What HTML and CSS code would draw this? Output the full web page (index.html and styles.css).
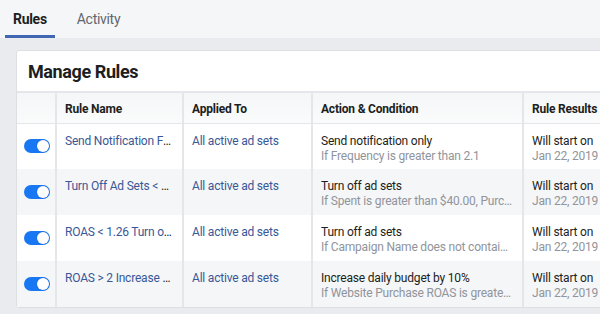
FILE: index.html
```html
<!DOCTYPE html>
<html lang="en">
<head>
    <meta charset="UTF-8">
    <title>Automated Rules</title>
    <link rel="stylesheet" href="styles.css">
</head>
<body>
    <div class="tab-bar">
        <div class="tab active">Rules</div>
        <div class="tab">Activity</div>
    </div>

    <div class="page">
        <div class="card">
            <div class="card-header">
                <h1 class="card-title">Manage Rules</h1>
            </div>

            <table class="rules-table">
                <colgroup>
                    <col class="col-toggle">
                    <col class="col-name">
                    <col class="col-applied">
                    <col class="col-action">
                    <col class="col-results">
                </colgroup>
                <thead>
                    <tr>
                        <th></th>
                        <th>Rule Name</th>
                        <th>Applied To</th>
                        <th>Action &amp; Condition</th>
                        <th>Rule Results</th>
                    </tr>
                </thead>
                <tbody>
                    <tr>
                        <td class="toggle-cell"><span class="toggle"></span></td>
                        <td><a class="link">Send Notification Frequency &gt; 2.1</a></td>
                        <td><a class="link">All active ad sets</a></td>
                        <td>
                            <div class="main-text">Send notification only</div>
                            <div class="sub-text">If Frequency is greater than 2.1</div>
                        </td>
                        <td>
                            <div class="main-text">Will start on</div>
                            <div class="sub-text">Jan 22, 2019 in your time zone</div>
                        </td>
                    </tr>
                    <tr>
                        <td class="toggle-cell"><span class="toggle"></span></td>
                        <td><a class="link">Turn Off Ad Sets &lt; 1.26 ROAS</a></td>
                        <td><a class="link">All active ad sets</a></td>
                        <td>
                            <div class="main-text">Turn off ad sets</div>
                            <div class="sub-text">If Spent is greater than $40.00, Purchase ROAS is smaller than 1.26</div>
                        </td>
                        <td>
                            <div class="main-text">Will start on</div>
                            <div class="sub-text">Jan 22, 2019 in your time zone</div>
                        </td>
                    </tr>
                    <tr>
                        <td class="toggle-cell"><span class="toggle"></span></td>
                        <td><a class="link">ROAS &lt; 1.26 Turn off Ad Sets</a></td>
                        <td><a class="link">All active ad sets</a></td>
                        <td>
                            <div class="main-text">Turn off ad sets</div>
                            <div class="sub-text">If Campaign Name does not contain Retargeting</div>
                        </td>
                        <td>
                            <div class="main-text">Will start on</div>
                            <div class="sub-text">Jan 22, 2019 in your time zone</div>
                        </td>
                    </tr>
                    <tr>
                        <td class="toggle-cell"><span class="toggle"></span></td>
                        <td><a class="link">ROAS &gt; 2 Increase Budget 10%</a></td>
                        <td><a class="link">All active ad sets</a></td>
                        <td>
                            <div class="main-text">Increase daily budget by 10%</div>
                            <div class="sub-text">If Website Purchase ROAS is greater than 2</div>
                        </td>
                        <td>
                            <div class="main-text">Will start on</div>
                            <div class="sub-text">Jan 22, 2019 in your time zone</div>
                        </td>
                    </tr>
                </tbody>
            </table>
        </div>
    </div>
</body>
</html>
```

FILE: styles.css
```css
* {
    margin: 0;
    padding: 0;
    box-sizing: border-box;
}

body {
    font-family: Roboto, 'Liberation Sans', Arial, sans-serif;
    color: #1c1e21;
    background-color: #e9ebee;
    overflow: hidden;
    width: 600px;
    height: 314px;
}

.tab-bar {
    display: flex;
    height: 38px;
    padding-left: 5px;
    background: #f5f6f7;
}

.tab {
    padding: 0 8px;
    line-height: 38px;
    font-size: 14px;
    letter-spacing: -0.3px;
    color: #606770;
    margin-right: 14px;
}

.tab.active {
    font-weight: bold;
    color: #1c1e21;
    box-shadow: inset 0 -3px 0 #4267b2;
}

.page {
    padding: 12px 0 0 16px;
}

.card {
    width: 720px;
    background: #fff;
    border: 1px solid #dddfe2;
    border-radius: 3px;
}

.card-header {
    height: 42px;
    padding-left: 11px;
    display: flex;
    align-items: center;
    border-bottom: 2px solid #e5e6e9;
}

.card-title {
    font-size: 18px;
    letter-spacing: -0.4px;
    font-weight: bold;
}

.rules-table {
    width: 100%;
    border-collapse: collapse;
    table-layout: fixed;
    font-size: 12px;
    letter-spacing: -0.2px;
}

.col-toggle { width: 39px; }
.col-name { width: 127px; }
.col-applied { width: 129px; }
.col-action { width: 211px; }

.rules-table th {
    height: 30px;
    text-align: left;
    padding: 2px 8px 0;
    font-weight: bold;
    background: linear-gradient(#f5f6f7, #fafbfb);
    border-bottom: 1px solid #e5e6e9;
}

.rules-table th + th,
.rules-table td + td {
    border-left: 2px solid #e5e6e9;
}

.rules-table td {
    height: 46px;
    padding: 10px 8px 0;
    vertical-align: top;
    white-space: nowrap;
    overflow: hidden;
    text-overflow: ellipsis;
    line-height: 15px;
}

.rules-table tbody tr:nth-child(even) td {
    background: #f5f6f7;
}

.rules-table td.toggle-cell {
    padding: 0 0 0 7px;
    vertical-align: middle;
}

.toggle {
    display: block;
    position: relative;
    width: 26px;
    height: 14px;
    border-radius: 7px;
    background: #1877f2;
}

.toggle::after {
    content: "";
    position: absolute;
    top: 1px;
    right: 1px;
    width: 12px;
    height: 12px;
    border-radius: 50%;
    background: #fff;
    box-shadow: 0 0 1px rgba(0, 0, 0, 0.3);
}

.link {
    color: #385898;
}

.main-text,
.sub-text {
    overflow: hidden;
    text-overflow: ellipsis;
}

.sub-text {
    color: #90949c;
}
```
